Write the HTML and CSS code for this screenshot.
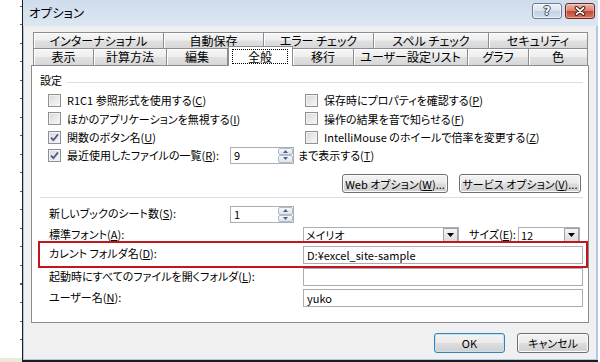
FILE: index.html
```html
<!DOCTYPE html>
<html lang="ja">
<head>
<meta charset="utf-8">
<title>オプション</title>
<link rel="stylesheet" href="styles.css">
</head>
<body>
<div class="screen">
  <div class="sheet"></div>
  <div class="window">
    <div class="titlebar">
      <span class="title">オプション</span>
      <div class="caption">
        <span class="cbtn help">?</span>
        <span class="cbtn close"><svg width="14" height="10" viewBox="0 0 14 10"><path d="M3.5 1.8 L10.5 8.2 M10.5 1.8 L3.5 8.2" stroke="#3b1c16" stroke-width="3.6" stroke-linecap="round" fill="none"/><path d="M3.5 1.8 L10.5 8.2 M10.5 1.8 L3.5 8.2" stroke="#ffffff" stroke-width="1.8" stroke-linecap="round" fill="none"/></svg></span>
      </div>
    </div>
    <div class="body">
      <div class="tabs">
        <div class="tabrow back">
          <span class="tab t-intl">インターナショナル</span>
          <span class="tab t-auto">自動保存</span>
          <span class="tab t-err">エラー チェック</span>
          <span class="tab t-spell">スペル チェック</span>
          <span class="tab t-sec">セキュリティ</span>
        </div>
        <div class="tabrow front">
          <span class="tab t-view">表示</span>
          <span class="tab t-calc">計算方法</span>
          <span class="tab t-edit">編集</span>
          <span class="tab t-gen sel"><span class="focus">全般</span></span>
          <span class="tab t-mig">移行</span>
          <span class="tab t-user">ユーザー設定リスト</span>
          <span class="tab t-graph">グラフ</span>
          <span class="tab t-color">色</span>
        </div>
      </div>
      <div class="panel">
        <div class="group"><span>設定</span><span class="group-line"></span></div>
        <div class="checks">
          <label class="check"><span class="cb"></span><span>R1C1 参照形式を使用する(<u>C</u>)</span></label>
          <label class="check"><span class="cb"></span><span>保存時にプロパティを確認する(<u>P</u>)</span></label>
          <label class="check"><span class="cb"></span><span>ほかのアプリケーションを無視する(<u>I</u>)</span></label>
          <label class="check"><span class="cb"></span><span>操作の結果を音で知らせる(<u>F</u>)</span></label>
          <label class="check"><span class="cb on"><svg width="11" height="11" viewBox="0 0 11 11"><path d="M2 5.6 L4.4 8.2 L9 2.4" stroke="#4a5b84" stroke-width="1.8" fill="none"/></svg></span><span>関数のボタン名(<u>U</u>)</span></label>
          <label class="check"><span class="cb"></span><span>IntelliMouse のホイールで倍率を変更する(<u>Z</u>)</span></label>
          <div class="check row4">
            <span class="cb on"><svg width="11" height="11" viewBox="0 0 11 11"><path d="M2 5.6 L4.4 8.2 L9 2.4" stroke="#4a5b84" stroke-width="1.8" fill="none"/></svg></span>
            <span class="row4-lbl">最近使用したファイルの一覧(<u>R</u>):</span>
            <span class="spin"><span class="val">9</span><span class="arrows"><span><svg width="5" height="3" viewBox="0 0 5 3"><path d="M0 3 L2.5 0 L5 3Z" fill="#4e5f82"/></svg></span><span><svg width="5" height="3" viewBox="0 0 5 3"><path d="M0 0 L2.5 3 L5 0Z" fill="#4e5f82"/></svg></span></span></span>
            <span class="after">まで表示する(<u>T</u>)</span>
          </div>
        </div>
        <div class="btnrow">
          <span class="btn web">Web オプション(<u>W</u>)...</span>
          <span class="btn svc">サービス オプション(<u>V</u>)...</span>
        </div>
        <div class="sep"></div>
        <div class="form">
          <div class="frow r-sheets">
            <span class="lbl short">新しいブックのシート数(<u>S</u>):</span>
            <span class="spin"><span class="val">1</span><span class="arrows"><span><svg width="5" height="3" viewBox="0 0 5 3"><path d="M0 3 L2.5 0 L5 3Z" fill="#4e5f82"/></svg></span><span><svg width="5" height="3" viewBox="0 0 5 3"><path d="M0 0 L2.5 3 L5 0Z" fill="#4e5f82"/></svg></span></span></span>
          </div>
          <div class="frow r-font">
            <span class="lbl">標準フォント(<u>A</u>):</span>
            <span class="combo c-font"><span class="val">メイリオ</span><span class="drop"><svg width="7" height="4" viewBox="0 0 7 4"><path d="M0 0 L3.5 4 L7 0Z" fill="#000"/></svg></span></span>
            <span class="size-lbl">サイズ(<u>E</u>):</span>
            <span class="combo c-size"><span class="val">12</span><span class="drop"><svg width="7" height="4" viewBox="0 0 7 4"><path d="M0 0 L3.5 4 L7 0Z" fill="#000"/></svg></span></span>
          </div>
          <div class="frow r-current">
            <span class="lbl">カレント フォルダ名(<u>D</u>):</span>
            <span class="input">D:¥excel_site-sample</span>
          </div>
          <div class="frow r-start">
            <span class="lbl">起動時にすべてのファイルを開くフォルダ(<u>L</u>):</span>
            <span class="input"></span>
          </div>
          <div class="frow r-user">
            <span class="lbl">ユーザー名(<u>N</u>):</span>
            <span class="input">yuko</span>
          </div>
        </div>
      </div>
      <div class="footer">
        <span class="btn ok">OK</span>
        <span class="btn cancel">キャンセル</span>
      </div>
    </div>
  </div>
</div>
</body>
</html>
```
FILE: styles.css
```css
* { box-sizing: border-box; }
html, body { margin: 0; padding: 0; }
body {
  width: 600px;
  height: 362px;
  overflow: hidden;
  background: #ffffff;
  font-family: "Noto Sans CJK JP", "Noto Sans", sans-serif;
  font-size: 11px;
  line-height: 14px;
  color: #000;
  font-feature-settings: "palt";
}
u { text-decoration-thickness: 1px; text-underline-offset: 1px; }

.screen { display: flex; width: 600px; height: 362px; }

.sheet {
  width: 22px;
  flex: none;
  background:
    linear-gradient(#ece9d8, #ece9d8) left bottom / 22px 4px no-repeat,
    repeating-linear-gradient(to bottom, transparent 0 6px, #5c5c5c 6px 7px, transparent 7px 18.5px) right top / 2px 100% no-repeat,
    #ffffff;
}

.window {
  width: 576px;
  height: 362px;
  flex: none;
  display: flex;
  flex-direction: column;
  border-left: 1px solid #1d1d1d;
  border-bottom: 2px solid #1d1d1d;
  background: #f0f0f0;
  box-shadow: inset 1px 0 #aec8ea, inset -2px 0 #aec8ea, inset 0 -1px #aec8ea;
}

.titlebar {
  height: 26px;
  flex: none;
  display: flex;
  justify-content: space-between;
  align-items: flex-start;
  padding: 0 3px 0 6px;
  background: linear-gradient(#cfdcec, #dde7f2);
}
.title { font-size: 12.5px; line-height: 26px; color: #000; }
.caption { display: flex; gap: 3px; margin-top: 3px; }
.cbtn {
  width: 30px;
  height: 16px;
  border-radius: 3px;
  display: flex;
  align-items: center;
  justify-content: center;
}
.help {
  border: 1px solid #6b7d96;
  background: linear-gradient(#eef3f9 0%, #d8e2ee 48%, #c2d1e3 52%, #d2deec 100%);
  box-shadow: inset 0 0 0 1px rgba(255,255,255,0.6);
  color: #ffffff;
  font: bold 12px/14px "DejaVu Sans", sans-serif;
  text-shadow: 1px 0 #34465e, -1px 0 #34465e, 0 1px #34465e, 0 -1px #34465e;
}
.close {
  border: 1px solid #6a2a22;
  background: linear-gradient(#eeb4a8 0%, #da8472 46%, #c6482f 52%, #d8745c 100%);
  box-shadow: inset 0 0 0 1px rgba(255,255,255,0.35);
}

.body {
  flex: 1;
  display: flex;
  flex-direction: column;
  padding: 6px 9px 0 8px;
}

.tabs { margin-left: 2px; width: 555px; }
.tabrow { display: flex; }
.back { height: 16px; }
.front { height: 17px; align-items: flex-end; }
.tab {
  height: 100%;
  flex: none;
  display: flex;
  align-items: center;
  justify-content: center;
  border-top: 1px solid #898c95;
  border-right: 1px solid #898c95;
  background: linear-gradient(#f6f6f6 0%, #eeeeee 48%, #e0e0e0 52%, #d8d8d8 100%);
  box-shadow: inset 1px 1px #ffffff;
  font-size: 12px;
  line-height: 14px;
  white-space: nowrap;
}
.tab:first-child { border-left: 1px solid #898c95; }
.t-intl { width: 131px; }
.t-auto { width: 100px; }
.t-err { width: 110px; }
.t-spell { width: 115px; }
.t-sec { width: 99px; }
.t-view { width: 61px; }
.t-calc { width: 73px; }
.t-edit { width: 61px; }
.t-gen { width: 65px; }
.t-mig { width: 61px; }
.t-user { width: 114px; }
.t-graph { width: 61px; }
.t-color { width: 59px; }
.tab.sel {
  height: 20px;
  margin-bottom: -1px;
  z-index: 2;
  background: #ffffff;
  border-left: 1px solid #898c95;
  box-shadow: none;
  align-items: stretch;
  padding: 2px 4px 2px 3px;
}
.focus {
  flex: 1;
  display: flex;
  align-items: center;
  justify-content: center;
  border: 1px dotted #000;
}

.panel {
  height: 258px;
  flex: none;
  border: 1px solid #898c95;
  background: #ffffff;
  display: flex;
  flex-direction: column;
}

.group {
  display: flex;
  align-items: center;
  height: 14px;
  margin: 7px 5px 0 8px;
}
.group-line { flex: 1; height: 1px; background: #d5dfe5; margin: 4px 0 0 5px; }

.checks {
  display: grid;
  grid-template-columns: 257px 1fr;
  grid-template-rows: 18px 19px 18px 18px;
  margin: 4px 0 0 16px;
}
.check { display: flex; align-items: center; gap: 6px; white-space: nowrap; }
.cb {
  width: 13px;
  height: 13px;
  flex: none;
  display: flex;
  align-items: center;
  justify-content: center;
  border: 1px solid #8f8f8f;
  background: linear-gradient(135deg, #d6d8dc, #f8f8f8);
  box-shadow: inset 0 0 0 1px #f2f2f2;
}
.row4 { grid-column: 1 / 3; gap: 0; }
.row4-lbl { width: 163px; margin-left: 6px; }
.after { margin-left: 4px; }

.spin {
  width: 64px;
  height: 17px;
  flex: none;
  display: flex;
  border: 1px solid #abadb3;
  background: #ffffff;
}
.spin .val { flex: 1; padding-left: 3px; line-height: 15px; }
.arrows { width: 15px; display: flex; flex-direction: column; }
.arrows span {
  flex: 1;
  display: flex;
  align-items: center;
  justify-content: center;
  border: 1px solid #b2bccc;
  border-radius: 2px;
  background: linear-gradient(#f6f8fb, #dde4ee);
}

.btnrow {
  display: flex;
  justify-content: flex-end;
  gap: 11px;
  margin: 10px 7px 0 0;
}
.btn {
  height: 19px;
  display: flex;
  align-items: center;
  justify-content: center;
  border: 1px solid #707070;
  border-radius: 3px;
  background: linear-gradient(#f3f3f3 0%, #ebebeb 48%, #dddddd 52%, #cfcfcf 100%);
  box-shadow: inset 0 0 0 1px #fbfbfb;
  white-space: nowrap;
}
.web { width: 106px; }
.svc { width: 122px; }

.sep { height: 1px; background: #d5dfe5; margin: 4px 5px 0 8px; }

.form {
  display: flex;
  flex-direction: column;
  margin-top: 8px;
  padding-left: 17px;
}
.frow { display: flex; align-items: center; white-space: nowrap; }
.lbl { width: 254px; flex: none; margin-bottom: 3px; }
.lbl.short { width: 181px; }
.r-sheets { height: 17px; }
.r-font { height: 16px; margin-top: 4px; }
.r-current {
  width: 550px;
  height: 27px;
  margin: -2px 0 0 -11px;
  padding-left: 9px;
  border: 2px solid #c0161c;
}
.r-start { height: 18px; }
.r-user { height: 18px; margin-top: 3px; }

.input {
  width: 280px;
  height: 18px;
  flex: none;
  border: 1px solid #abadb3;
  background: #ffffff;
  padding-left: 3px;
  line-height: 16px;
}

.combo {
  height: 16px;
  flex: none;
  display: flex;
  border: 1px solid #a9afb8;
  background: #ffffff;
}
.combo .val { flex: 1; padding-left: 2px; line-height: 14px; }
.c-font { width: 156px; }
.c-size { width: 62px; }
.drop {
  width: 15px;
  display: flex;
  align-items: center;
  justify-content: center;
  border: 1px solid #9ea3aa;
  background: linear-gradient(#f4f4f4, #dcdcdc);
}
.size-lbl { width: 49px; margin-left: 10px; margin-bottom: 3px; }

.footer {
  display: flex;
  justify-content: flex-end;
  gap: 12px;
  margin-top: 10px;
}
.ok, .cancel { height: 20px; font-size: 11px; }
.ok {
  width: 71px;
  border-color: #3c7fb1;
  box-shadow: inset 0 0 0 1px #bfe3f7;
}
.cancel { width: 72px; }
```
